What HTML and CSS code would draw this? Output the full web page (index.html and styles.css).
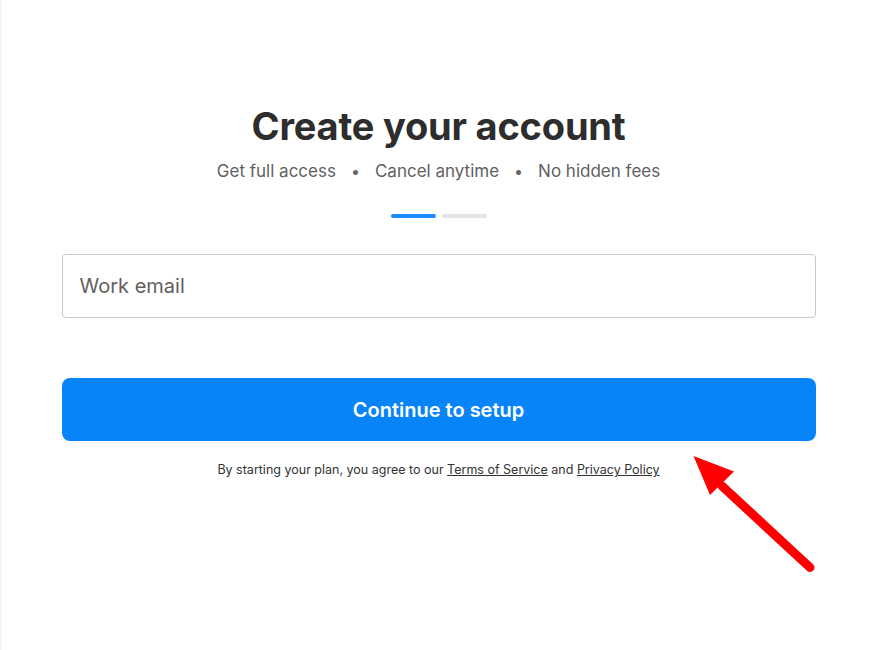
FILE: index.html
```html
<!DOCTYPE html>
<html lang="en">
<head>
<meta charset="utf-8">
<title>Create your account</title>
<link rel="stylesheet" href="styles.css">
</head>
<body>
<div class="page">
  <main class="card">
    <h1 class="title">Create your account</h1>
    <p class="subtitle">
      <span>Get full access</span><span class="dot">•</span><span>Cancel anytime</span><span class="dot">•</span><span>No hidden fees</span>
    </p>
    <div class="steps">
      <span class="step active"></span>
      <span class="step"></span>
    </div>
    <input class="field" type="email" placeholder="Work email">
    <button class="cta" type="button">Continue to setup</button>
    <p class="terms">By starting your plan, you agree to our <a href="#">Terms of Service</a> and <a href="#">Privacy Policy</a></p>
  </main>
  <svg class="arrow" width="140" height="140" viewBox="0 0 140 140" aria-hidden="true">
    <line x1="126" y1="125.5" x2="38" y2="44" stroke="#ff0000" stroke-width="9" stroke-linecap="round"/>
    <polygon points="9.5,14 50,29.5 26,53" fill="#ff0000"/>
  </svg>
</div>
</body>
</html>
```

FILE: styles.css
```css
html, body {
  margin: 0;
  padding: 0;
  background: #ffffff;
}

.page {
  position: relative;
  min-height: 650px;
  border-left: 2px solid #f5f5fb;
  font-family: "Inter", "Liberation Sans", Arial, sans-serif;
}

.card {
  width: 754px;
  margin: 0 auto;
  padding-top: 102px;
  display: flex;
  flex-direction: column;
  align-items: stretch;
}

.title {
  margin: 0;
  text-align: center;
  font-size: 38px;
  line-height: 48px;
  font-weight: 700;
  color: #2d2d2d;
  letter-spacing: -0.2px;
}

.subtitle {
  margin: 9px 0 0;
  display: flex;
  justify-content: center;
  align-items: baseline;
  gap: 15px;
  font-size: 17px;
  line-height: 24px;
  color: #5f5f5f;
}

.dot {
  font-size: 16px;
  color: #666;
}

.steps {
  margin-top: 31px;
  display: flex;
  justify-content: center;
  gap: 6px;
}

.step {
  width: 45px;
  height: 4px;
  background: #e4e4e9;
  border-radius: 1px;
}

.step.active {
  background: #1a8cff;
  border-radius: 2px;
}

.field {
  margin-top: 36px;
  box-sizing: border-box;
  width: 100%;
  height: 64px;
  border: 1px solid #c9c9c9;
  border-radius: 4px;
  padding: 0 17px;
  font-family: inherit;
  font-size: 20px;
  color: #333;
  background: #fff;
  outline: none;
}

.field::placeholder {
  color: #5f5f5f;
}

.cta {
  margin-top: 60px;
  height: 63px;
  border: 0;
  border-radius: 8px;
  background: #0784f8;
  color: #ffffff;
  font-family: inherit;
  font-size: 20px;
  font-weight: 600;
  cursor: pointer;
}

.terms {
  margin: 20px 0 0;
  text-align: center;
  font-size: 12.5px;
  line-height: 18px;
  color: #333;
}

.terms a {
  color: #333;
  text-decoration: underline;
}

.arrow {
  position: absolute;
  left: 682px;
  top: 442px;
}
```
